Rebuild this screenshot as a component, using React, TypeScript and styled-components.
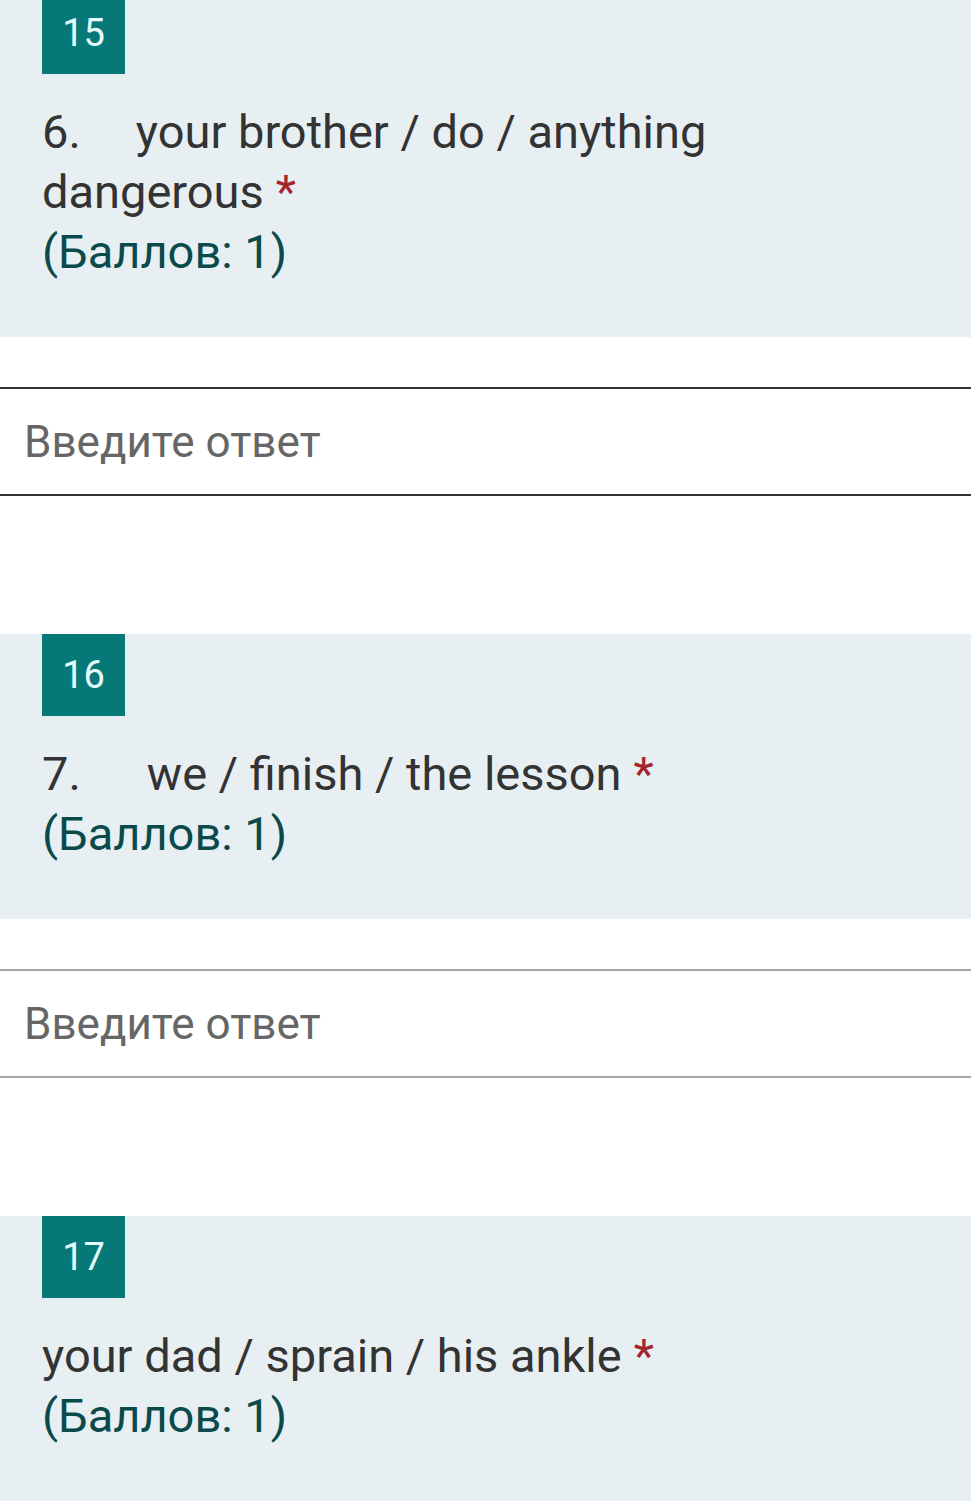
import React from "react";
import styled, { createGlobalStyle } from "styled-components";

const Global = createGlobalStyle`
  html, body { margin: 0; padding: 0; background: #ffffff; }
  body { font-family: Roboto, "Noto Sans", Arial, sans-serif; }
`;

const Page = styled.div`
  display: flex;
  flex-direction: column;
  margin-top: -8px;
  width: 971px;
  overflow: hidden;
`;

const Question = styled.section`
  display: flex;
  flex-direction: column;
`;

const Card = styled.div`
  background: #e7eff2;
  padding: 0 42px 55px 42px;
  display: flex;
  flex-direction: column;
  align-items: flex-start;
`;

const Badge = styled.div`
  width: 83px;
  height: 82px;
  background: #077878;
  color: #e6fbfb;
  font-size: 38px;
  display: flex;
  align-items: center;
  justify-content: center;
  margin-bottom: 28px;
`;

const Title = styled.div`
  font-size: 47px;
  line-height: 60px;
  color: #333333;
  max-width: 880px;
`;

const Num = styled.span<{ $gap: number }>`
  display: inline-block;
  margin-right: ${(p) => p.$gap}px;
`;

const Star = styled.span`
  color: #a4262c;
  margin-left: 12px;
`;

const Points = styled.div`
  font-size: 47px;
  line-height: 60px;
  color: #0b4a4b;
`;

const Answer = styled.div`
  padding: 50px 0 138px 0;
`;

const Input = styled.div<{ $focused?: boolean }>`
  border-top: 2px solid ${(p) => (p.$focused ? "#333333" : "#a6a6a6")};
  border-bottom: 2px solid ${(p) => (p.$focused ? "#333333" : "#a6a6a6")};
  height: 105px;
  display: flex;
  align-items: center;
  padding: 0 24px;
  font-size: 44px;
  color: #666666;
  box-sizing: content-box;
`;

type Q = {
  badge: string;
  num?: string;
  gap?: number;
  text: string;
  focused?: boolean;
  input?: boolean;
};

const questions: Q[] = [
  { badge: "15", num: "6.", gap: 55, text: "your brother / do / anything dangerous", focused: true, input: true },
  { badge: "16", num: "7.", gap: 66, text: "we / finish / the lesson", input: true },
  { badge: "17", text: "your dad / sprain / his ankle", input: false },
];

export default function App() {
  return (
    <>
      <Global />
      <Page>
        {questions.map((q) => (
          <Question key={q.badge}>
            <Card>
              <Badge>{q.badge}</Badge>
              <Title>
                {q.num && <Num $gap={q.gap ?? 0}>{q.num}</Num>}
                {q.text}
                <Star>*</Star>
              </Title>
              <Points>(Баллов: 1)</Points>
            </Card>
            {q.input && (
              <Answer>
                <Input $focused={q.focused}>Введите ответ</Input>
              </Answer>
            )}
          </Question>
        ))}
      </Page>
    </>
  );
}
